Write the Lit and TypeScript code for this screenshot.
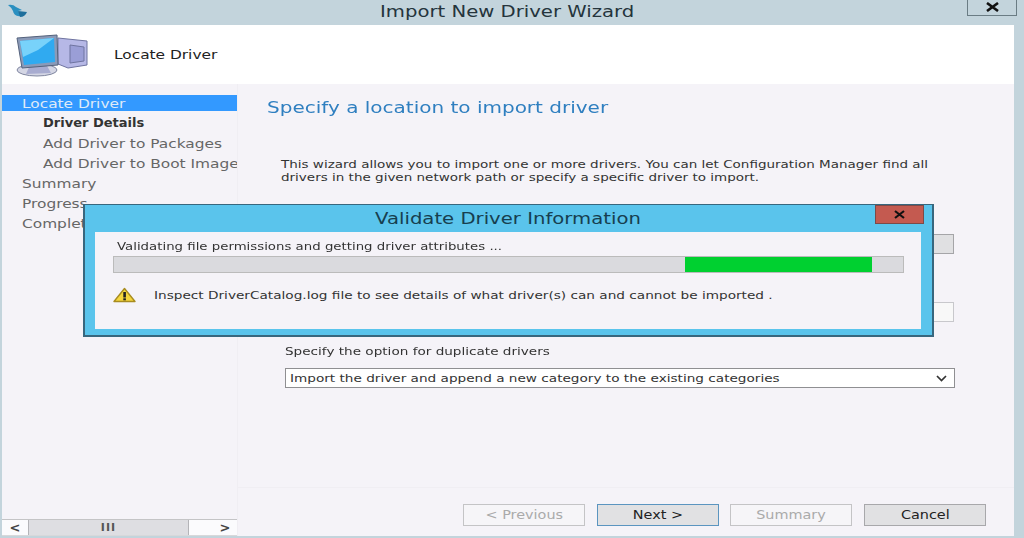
import { LitElement, html, css } from "lit";
import { customElement } from "lit/decorators.js";

@customElement("app-root")
export class AppRoot extends LitElement {
  static styles = css`
    :host { display: block; width: 1024px; height: 538px; overflow: hidden; position: relative; font-family: "DejaVu Sans", sans-serif; font-size: 12px; color: #333; }
    .win { width: 1024px; height: 538px; box-sizing: border-box; background: #c3d4dc; padding: 0 10px 2px 2px; display: flex; flex-direction: column; filter: blur(0.5px); }
    .title { height: 25px; flex: none; display: flex; align-items: center; position: relative; margin-right: -10px; }
    .appicon { margin-left: 5px; margin-top: -3px; }
    .title-text { position: absolute; left: 378px; top: 2px; font-size: 15px; line-height: 20px; color: #25343c; white-space: nowrap; transform: scaleX(1.31); transform-origin: left; }
    .close { position: absolute; left: 965px; top: -2px; width: 50px; height: 18px; box-sizing: border-box; border: 1px solid #6a7c84; display: flex; align-items: center; justify-content: center; }
    .head { height: 59px; flex: none; background: #fff; display: flex; }
    .pc { margin: 8px 0 0 14px; flex: none; }
    .head-text { margin: 21px 0 0 24px; font-size: 12.5px; line-height: 18px; color: #222; transform: scaleX(1.23); transform-origin: left; white-space: nowrap; }
    .body { flex: 1; display: grid; grid-template-columns: 236px 1fr; background: #f5f3f8; min-height: 0; }
    .side { display: flex; flex-direction: column; padding-top: 11px; border-right: 1px solid #f0eef3; position: relative; overflow: hidden; }
    .item { height: 20px; line-height: 19px; white-space: nowrap; font-size: 12.5px; color: #666; padding-left: 20px; flex: none; }
    .item span { display: inline-block; transform: scaleX(1.23); transform-origin: left; }
    .item.sub { padding-left: 41px; }
    .item.sel { background: #3399ff; color: #dfeaf8; height: 16px; line-height: 17px; margin-bottom: 3px; }
    .item.bold { font-weight: 700; color: #333; font-size: 12px; }
    .item.bold span { transform: scaleX(1.085); }
    .spacer { flex: 1; }
    .scroll { height: 15px; flex: none; display: grid; grid-template-columns: 26px 1fr 24px 24px; background: #fbfbfd; border-top: 1px solid #c4c4c6; border-bottom: 1px solid #d8d8da; font-size: 11px; }
    .scroll div { display: flex; align-items: center; justify-content: center; box-sizing: border-box; }
    .thumb { background: #dedee2; border: 1px solid #b4b4b8; border-width: 0 1px; color: #555; font-weight: 700; letter-spacing: 1px; }
    .arrow { color: #444; font-weight: 700; font-size: 13px; }
    .main { display: flex; flex-direction: column; padding: 0 0 0 29px; position: relative; min-height: 0; }
    h1 { margin: 13px 0 0; font-weight: 400; font-size: 16px; color: #2f7fc0; line-height: 22px; white-space: nowrap; transform: scaleX(1.25); transform-origin: left; }
    .desc { margin: 39px 0 0 14px; width: 542px; font-size: 11px; line-height: 13px; color: #333; transform: scaleX(1.227); transform-origin: left; }
    .form { margin-left: 18px; width: 669px; display: flex; flex-direction: column; }
    .btnbox { align-self: flex-end; width: 30px; height: 20px; box-sizing: border-box; background: #e0e0e2; border: 1px solid #a5a5a8; margin-top: 50px; }
    .input { align-self: flex-end; width: 30px; height: 20px; box-sizing: border-box; background: #f8f8f8; border: 1px solid #c8c8cc; margin-top: 48px; }
    .label { font-size: 11px; margin-top: 23px; line-height: 14px; color: #333; white-space: nowrap; transform: scaleX(1.235); transform-origin: left; }
    .select { margin-top: 9px; height: 20px; width: 670px; box-sizing: border-box; background: #fff; border: 1px solid #8f8f92; display: flex; align-items: center; justify-content: space-between; padding: 0 7px 0 4px; font-size: 11px; color: #333; white-space: nowrap; }
    .select span { transform: scaleX(1.238); transform-origin: left; }
    .spring { flex: 1; }
    .rule { height: 1px; background: #f0eef3; margin-left: -29px; margin-bottom: 16px; }
    .buttons { display: flex; gap: 11.7px; padding-left: 196px; margin-bottom: 10px; }
    .b { width: 122px; height: 22px; box-sizing: border-box; display: flex; align-items: center; justify-content: center; font-size: 12px; border: 1px solid #a8a8ab; background: #e1e1e3; color: #222; }
    .b span { transform: scaleX(1.2); }
    .b.off { background: #f6f5f8; color: #aaa; border-color: #c4c4c6; }
    .b.next { border-color: #5b95c0; }
    .dialog { position: absolute; left: 83px; top: 204px; width: 851px; height: 133px; box-sizing: border-box; background: #5ac4ec; border: 2px solid #38677e; border-width: 1px 2px 2px 2px; padding: 27px 11px 6px 10px; filter: blur(0.5px); }
    .dlg-title { position: absolute; left: 290px; top: 4px; font-size: 15px; color: #173f50; line-height: 20px; white-space: nowrap; transform: scaleX(1.31); transform-origin: left; }
    .dlg-x { position: absolute; left: 790px; top: 0; width: 49px; height: 19px; background: #c45a50; border: 1px solid #7c4a48; box-sizing: border-box; display: flex; align-items: center; justify-content: center; }
    .dlg-body { height: 100%; background: #f5f3f8; box-sizing: border-box; padding: 8px 19px 0 18px; display: flex; flex-direction: column; }
    .dlg-top { margin-left: 4px; font-size: 11px; line-height: 14px; color: #333; white-space: nowrap; transform: scaleX(1.21); transform-origin: left; }
    .bar { margin-top: 2px; height: 17px; width: 791px; box-sizing: border-box; border: 1px solid #bbb; background: #dadade; display: flex; flex: none; }
    .bar span { height: 100%; background: #00d030; margin-left: 571px; width: 187px; }
    .warn { display: flex; align-items: center; margin-top: 14px; font-size: 11px; color: #333; white-space: nowrap; }
    .warn svg { margin-right: 18px; flex: none; }
    .warn span { transform: scaleX(1.24); transform-origin: left; }
  `;

  render() {
    return html`
      <div class="win">
        <div class="title">
          <svg class="appicon" width="22" height="16" viewBox="0 0 22 16">
            <path d="M1 2 Q6 1 9 4 L15 7 L11 8 L14 13 Q7 14 6 8 Q5 5 1 2Z" fill="#2a8fc0"/>
            <path d="M11 8 L20 9 Q18 14 13 14Z" fill="#1f6f9c"/>
          </svg>
          <div class="title-text">Import New Driver Wizard</div>
          <div class="close">
            <svg width="15" height="10" viewBox="0 0 15 10"><path d="M2 1 L13 9 M13 1 L2 9" stroke="#111" stroke-width="2.6"/></svg>
          </div>
        </div>
        <div class="head">
          <svg class="pc" width="74" height="46" viewBox="0 0 74 46">
            <ellipse cx="21" cy="37" rx="20" ry="6" fill="#d4d6e4" stroke="#7f86a0"/>
            <path d="M14 32 L30 31 L35 40 L10 41Z" fill="#a8acd0"/>
            <path d="M42 5 L71 8 L71 32 L52 35 L42 31Z" fill="#b6b8e6" stroke="#6f74a0"/>
            <path d="M54 12 L68 14 L68 28 L54 30Z" fill="#9a9ed6" stroke="#6f74a0"/>
            <path d="M1 5 L41 2 L42 32 L6 35Z" fill="#8a9ab8" stroke="#54627c"/>
            <path d="M4 8 L38 5 L39 29 L8 32Z" fill="#30aaf0"/>
            <path d="M4 8 L38 5 L22 17 L7 24Z" fill="#78d2fa"/>
          </svg>
          <div class="head-text">Locate Driver</div>
        </div>
        <div class="body">
          <div class="side">
            <div class="item sel"><span>Locate Driver</span></div>
            <div class="item sub bold"><span>Driver Details</span></div>
            <div class="item sub"><span>Add Driver to Packages</span></div>
            <div class="item sub"><span>Add Driver to Boot Images</span></div>
            <div class="item"><span>Summary</span></div>
            <div class="item"><span>Progress</span></div>
            <div class="item"><span>Completion</span></div>
            <div class="spacer"></div>
            <div class="scroll">
              <div class="arrow">&lt;</div>
              <div class="thumb">III</div>
              <div></div>
              <div class="arrow">&gt;</div>
            </div>
          </div>
          <div class="main">
            <h1>Specify a location to import driver</h1>
            <div class="desc">This wizard allows you to import one or more drivers. You can let Configuration Manager find all drivers in the given network path or specify a specific driver to import.</div>
            <div class="form">
              <div class="btnbox"></div>
              <div class="input"></div>
              <div class="label">Specify the option for duplicate drivers</div>
              <div class="select">
                <span>Import the driver and append a new category to the existing categories</span>
                <svg width="11" height="7" viewBox="0 0 11 7"><path d="M1 1 L5.5 5.5 L10 1" fill="none" stroke="#333" stroke-width="1.7"/></svg>
              </div>
            </div>
            <div class="spring"></div>
            <div class="rule"></div>
            <div class="buttons">
              <div class="b off"><span>&lt; Previous</span></div>
              <div class="b next"><span>Next &gt;</span></div>
              <div class="b off"><span>Summary</span></div>
              <div class="b"><span>Cancel</span></div>
            </div>
          </div>
        </div>
      </div>
      <div class="dialog">
        <div class="dlg-title">Validate Driver Information</div>
        <div class="dlg-x">
          <svg width="13" height="9" viewBox="0 0 13 9"><path d="M2 1 L11 8 M11 1 L2 8" stroke="#111" stroke-width="2.2"/></svg>
        </div>
        <div class="dlg-body">
          <div class="dlg-top">Validating file permissions and getting driver attributes ...</div>
          <div class="bar"><span></span></div>
          <div class="warn">
            <svg width="23" height="16" viewBox="0 0 23 16">
              <path d="M11.5 1.5 L22 14.5 L1 14.5Z" fill="#f5d63c" stroke="#a88c20" stroke-width="1.4" stroke-linejoin="round"/>
              <rect x="10.3" y="5" width="2.6" height="5.5" fill="#222"/>
              <rect x="10.3" y="11.3" width="2.6" height="2" fill="#222"/>
            </svg>
            <span>Inspect DriverCatalog.log file to see details of what driver(s) can and cannot be imported .</span>
          </div>
        </div>
      </div>
    `;
  }
}
